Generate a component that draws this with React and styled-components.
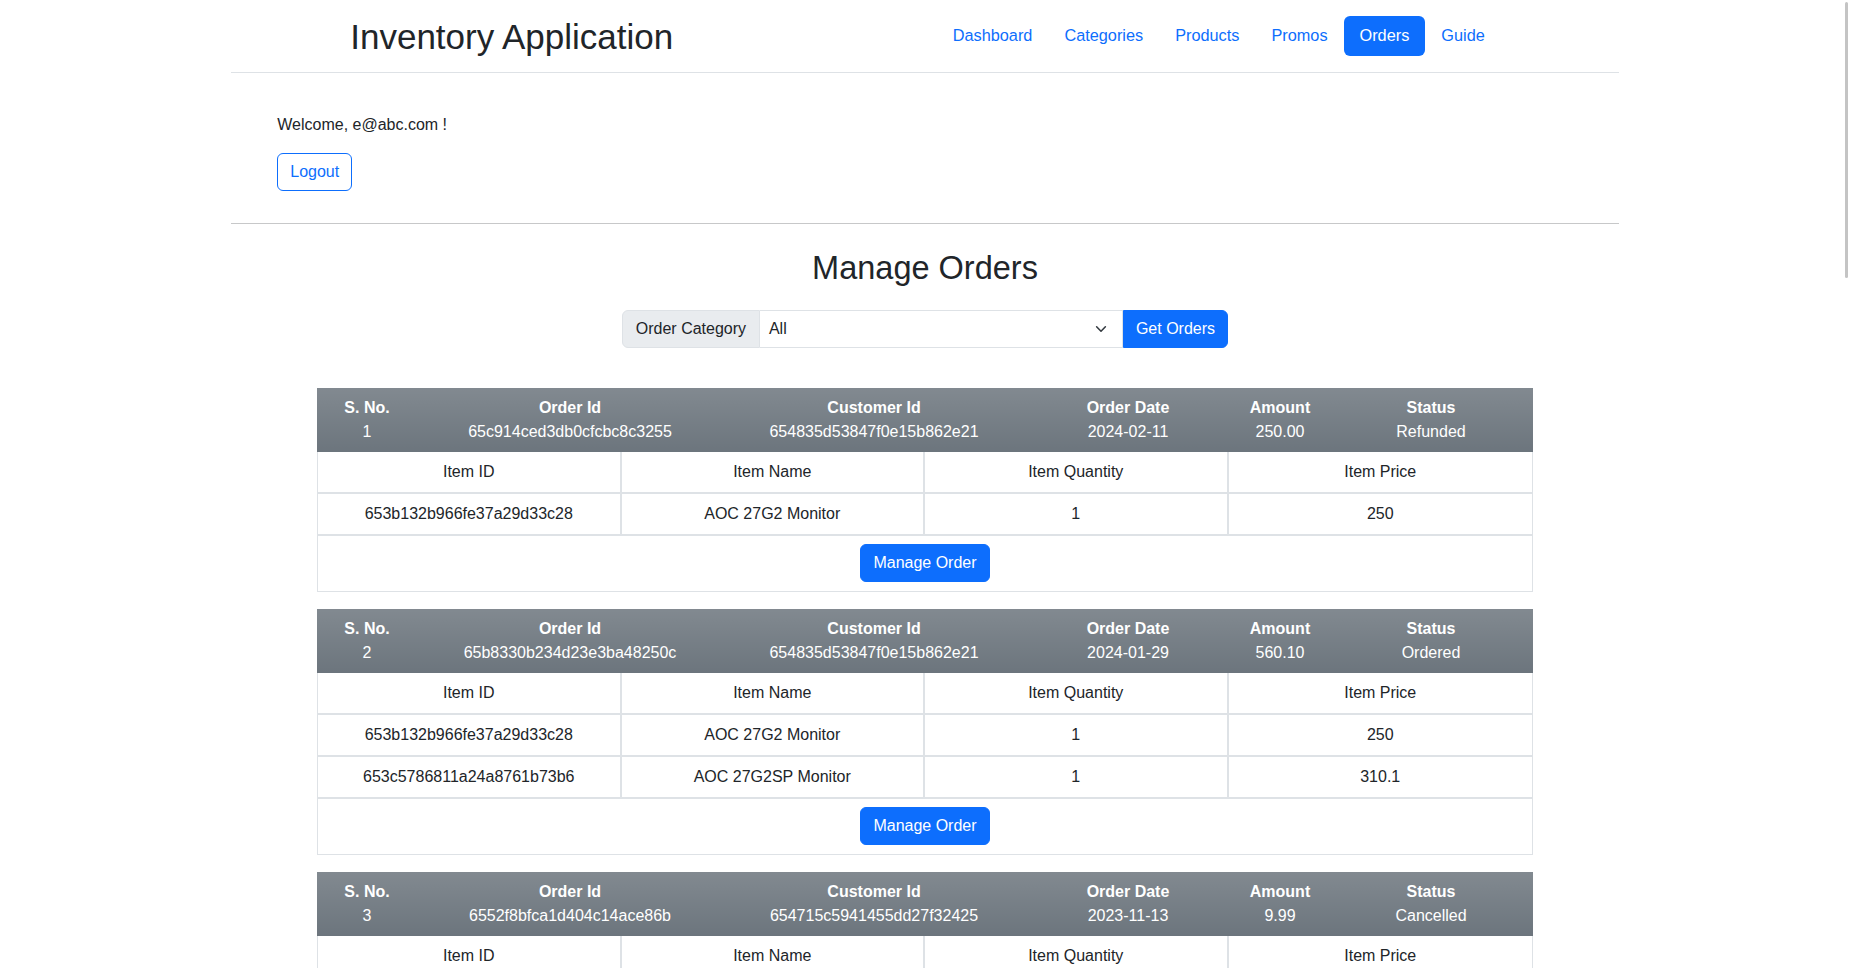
import React from 'react';
import styled, { createGlobalStyle } from 'styled-components';

const GlobalStyle = createGlobalStyle`
  html {
    scrollbar-width: none;
  }
  html::-webkit-scrollbar {
    display: none;
  }
  body {
    margin: 0;
    font-family: "Liberation Sans", Arial, sans-serif;
    font-size: 16px;
    line-height: 1.5;
    color: #212529;
    background: #fff;
  }
  * {
    box-sizing: border-box;
  }
`;

const orders = [
  {
    id: '65c914ced3db0cfcbc8c3255',
    customer: '654835d53847f0e15b862e21',
    date: '2024-02-11',
    amount: '250.00',
    status: 'Refunded',
    items: [['653b132b966fe37a29d33c28', 'AOC 27G2 Monitor', '1', '250']],
  },
  {
    id: '65b8330b234d23e3ba48250c',
    customer: '654835d53847f0e15b862e21',
    date: '2024-01-29',
    amount: '560.10',
    status: 'Ordered',
    items: [
      ['653b132b966fe37a29d33c28', 'AOC 27G2 Monitor', '1', '250'],
      ['653c5786811a24a8761b73b6', 'AOC 27G2SP Monitor', '1', '310.1'],
    ],
  },
  {
    id: '6552f8bfca1d404c14ace86b',
    customer: '654715c5941455dd27f32425',
    date: '2023-11-13',
    amount: '9.99',
    status: 'Cancelled',
    items: [['6552f7e2fca1d404c14ace7f', 'HDMI Cable 2m', '1', '9.99']],
  },
];

const navItems = ['Dashboard', 'Categories', 'Products', 'Promos', 'Orders', 'Guide'];

const Container = styled.div`
  width: 75%;
  margin: 0 auto;
`;

const Navbar = styled.header`
  height: 73px;
  display: flex;
  align-items: center;
  justify-content: space-between;
  padding: 0 118px 0 119px;
  border-bottom: 1px solid #dee2e6;
`;

const Brand = styled.div`
  font-size: 35px;
  font-weight: 500;
  line-height: 1.2;
  color: #212529;
  margin-top: 1px;
`;

const NavList = styled.nav`
  display: flex;
`;

const NavLink = styled.a`
  display: block;
  padding: 7px 16px 8px;
  border-radius: 6px;
  color: ${(p) => (p.$active ? '#fff' : '#0d6efd')};
  background: ${(p) => (p.$active ? '#0d6efd' : 'transparent')};
  text-decoration: none;
  cursor: pointer;
  font-size: 16.3px;
`;

const Welcome = styled.section`
  padding: 40px 46px 32px;
`;

const WelcomeText = styled.p`
  margin: 0 0 16px;
`;

const OutlineButton = styled.button`
  font: inherit;
  color: #0d6efd;
  background: #fff;
  border: 1px solid #0d6efd;
  border-radius: 6px;
  padding: 6px 12px;
  line-height: 24px;
`;

const Divider = styled.hr`
  margin: 0;
  border: 0;
  border-top: 1px solid #c7c8c9;
`;

const Heading = styled.h2`
  margin: 25px 0 22px;
  text-align: center;
  font-size: 32.5px;
  font-weight: 500;
  line-height: 1.2;
`;

const InputGroup = styled.div`
  display: flex;
  justify-content: center;
  margin-bottom: 40px;
`;

const GroupLabel = styled.span`
  padding: 6px 12px;
  line-height: 24px;
  background: #e9ecef;
  border: 1px solid #dee2e6;
  border-radius: 6px 0 0 6px;
  width: 138px;
  text-align: center;
`;

const SelectBox = styled.div`
  width: 363px;
  display: flex;
  align-items: center;
  justify-content: space-between;
  padding: 6px 14px 6px 9px;
  line-height: 24px;
  border: 1px solid #dee2e6;
  border-left: 0;
`;

const PrimaryButton = styled.button`
  font: inherit;
  line-height: 24px;
  color: #fff;
  background: #0d6efd;
  border: 1px solid #0d6efd;
  border-radius: ${(p) => p.$radius || '6px'};
  padding: 6px 12px;
  width: ${(p) => p.$width || 'auto'};
`;

const Orders = styled.div`
  width: 1216px;
  margin: 0 auto;
`;

const OrderBlock = styled.div`
  margin-bottom: 17px;
  border: 1px solid #dee2e6;
  border-top: 0;
`;

const OrderHead = styled.div`
  display: grid;
  grid-template-columns: 100px 306px 302px 206px 98px 204px;
  margin: 0 -1px;
  padding: 8px 0;
  color: #fff;
  background: #6c757d linear-gradient(180deg, rgba(255, 255, 255, 0.15), rgba(255, 255, 255, 0));
`;

const HeadCell = styled.div`
  text-align: center;
  line-height: 24px;
`;

const HeadLabel = styled.div`
  font-weight: 700;
`;

const ItemGrid = styled.div`
  display: grid;
  grid-template-columns: repeat(4, 1fr);
`;

const ItemCell = styled.div`
  text-align: center;
  padding: 8px;
  line-height: 24px;
  border-bottom: 2px solid #dee2e6;
  border-right: ${(p) => (p.$last ? '0' : '2px solid #dee2e6')};
`;

const ActionRow = styled.div`
  display: flex;
  justify-content: center;
  padding: 8px 0 9px;
`;

const ScrollThumb = styled.div`
  position: fixed;
  top: 2px;
  right: 2px;
  width: 3px;
  height: 276px;
  border-radius: 2px;
  background: #c4c4c4;
`;

const Chevron = () => (
  <svg width="14" height="14" viewBox="0 0 16 16" fill="none">
    <path d="M3 5.5l5 5 5-5" stroke="#343a40" strokeWidth="1.8" strokeLinecap="round" strokeLinejoin="round" />
  </svg>
);

const OrderTable = ({ order, index }) => {
  const head = [
    ['S. No.', index + 1],
    ['Order Id', order.id],
    ['Customer Id', order.customer],
    ['Order Date', order.date],
    ['Amount', order.amount],
    ['Status', order.status],
  ];
  const labels = ['Item ID', 'Item Name', 'Item Quantity', 'Item Price'];
  return (
    <OrderBlock>
      <OrderHead>
        {head.map(([label, value]) => (
          <HeadCell key={label}>
            <HeadLabel>{label}</HeadLabel>
            <div>{value}</div>
          </HeadCell>
        ))}
      </OrderHead>
      <ItemGrid>
        {labels.map((l, i) => (
          <ItemCell key={l} $last={i === 3}>{l}</ItemCell>
        ))}
        {order.items.map((row, r) =>
          row.map((v, i) => (
            <ItemCell key={r + '-' + i} $last={i === 3}>{v}</ItemCell>
          ))
        )}
      </ItemGrid>
      <ActionRow>
        <PrimaryButton $width="130px">Manage Order</PrimaryButton>
      </ActionRow>
    </OrderBlock>
  );
};

const App = () => {
  return (
    <>
      <GlobalStyle />
      <Container>
        <Navbar>
          <Brand>Inventory Application</Brand>
          <NavList>
            {navItems.map((n) => (
              <NavLink key={n} $active={n === 'Orders'}>{n}</NavLink>
            ))}
          </NavList>
        </Navbar>
        <Welcome>
          <WelcomeText>Welcome, e@abc.com !</WelcomeText>
          <OutlineButton>Logout</OutlineButton>
        </Welcome>
        <Divider />
      </Container>
      <Heading>Manage Orders</Heading>
      <InputGroup>
        <GroupLabel>Order Category</GroupLabel>
        <SelectBox>
          <span>All</span>
          <Chevron />
        </SelectBox>
        <PrimaryButton $radius="0 6px 6px 0">Get Orders</PrimaryButton>
      </InputGroup>
      <Orders>
        {orders.map((o, i) => (
          <OrderTable key={o.id} order={o} index={i} />
        ))}
      </Orders>
      <ScrollThumb />
    </>
  );
};

export default App;
